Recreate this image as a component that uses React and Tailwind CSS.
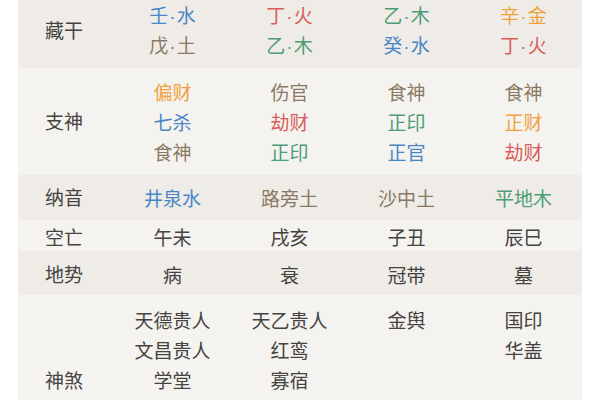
const C = {
  blue: 'text-[#4a86c6]',
  red: 'text-[#d75e58]',
  green: 'text-[#4c9c76]',
  orange: 'text-[#f0a03c]',
  brown: 'text-[#8a7964]',
  dark: 'text-[#454340]',
};

const dark = 'bg-[#efece8]';
const light = 'bg-[#f5f3f0]';

// a pair like 壬·水, both halves with their own colour
const pair = (a, b, ca, cb = ca) => [[a, ca], ['·', cb, true], [b, cb]];

const rows = [
  {
    label: '藏干', bg: dark, h: 'h-[76px]',
    cells: [
      [pair('壬', '水', C.blue), pair('戊', '土', C.brown)],
      [pair('丁', '火', C.red), pair('乙', '木', C.green)],
      [pair('乙', '木', C.green), pair('癸', '水', C.blue)],
      [pair('辛', '金', C.orange), pair('丁', '火', C.red)],
    ],
  },
  {
    label: '支神', bg: light, h: 'h-[107px]',
    cells: [
      [[['偏财', C.orange]], [['七杀', C.blue]], [['食神', C.brown]]],
      [[['伤官', C.brown]], [['劫财', C.red]], [['正印', C.green]]],
      [[['食神', C.brown]], [['正印', C.green]], [['正官', C.blue]]],
      [[['食神', C.brown]], [['正财', C.orange]], [['劫财', C.red]]],
    ],
  },
  {
    label: '纳音', bg: dark, h: 'h-[45px]',
    cells: [
      [[['井泉水', C.blue]]],
      [[['路旁土', C.brown]]],
      [[['沙中土', C.brown]]],
      [[['平地木', C.green]]],
    ],
  },
  {
    label: '空亡', bg: light, h: 'h-[31px] pt-[3px]',
    cells: [[[['午未', C.dark]]], [[['戌亥', C.dark]]], [[['子丑', C.dark]]], [[['辰巳', C.dark]]]],
  },
  {
    label: '地势', bg: dark, h: 'h-[44px] pt-[3px]',
    cells: [[[['病', C.dark]]], [[['衰', C.dark]]], [[['冠带', C.dark]]], [[['墓', C.dark]]]],
  },
];

const shensha = [
  ['天德贵人', '文昌贵人', '学堂'],
  ['天乙贵人', '红鸾', '寡宿'],
  ['金舆'],
  ['国印', '华盖'],
];

function Cell({ lines }) {
  return (
    <div className="w-[117px] flex flex-col items-center">
      {lines.map((line, i) => (
        <div key={i} className="h-[30px] leading-[30px] whitespace-nowrap">
          {line.map(([t, c, dot], j) => (
            <span
              key={j}
              className={`${c} ${dot ? 'mx-[1px]' : ''}`}
              style={dot ? { fontFamily: '"Liberation Sans", sans-serif' } : undefined}
            >
              {t}
            </span>
          ))}
        </div>
      ))}
    </div>
  );
}

export default function App() {
  return (
    <div className="w-[600px] h-[400px] overflow-hidden bg-white" style={{ fontFamily: '"Noto Sans CJK SC", "Noto Sans", sans-serif' }}>
      <div className="mx-[18px] -mt-[8px] text-[19px]">
        {rows.map((r) => (
          <div key={r.label} className={`flex items-center ${r.bg} ${r.h}`}>
            <div className={`w-[96px] pl-[27px] ${C.dark}`}>{r.label}</div>
            {r.cells.map((lines, i) => (
              <Cell key={i} lines={lines} />
            ))}
          </div>
        ))}

        {/* 神煞: label sits lower, list continues past the crop */}
        <div className={`flex h-[120px] ${light}`}>
          <div className={`w-[96px] pl-[27px] pt-[70px] leading-[30px] ${C.dark}`}>神煞</div>
          {shensha.map((items, i) => (
            <div key={i} className={`w-[117px] pt-[10px] flex flex-col items-center ${C.dark}`}>
              {items.map((t) => (
                <div key={t} className="h-[30px] leading-[30px] whitespace-nowrap">{t}</div>
              ))}
            </div>
          ))}
        </div>
      </div>
    </div>
  );
}
